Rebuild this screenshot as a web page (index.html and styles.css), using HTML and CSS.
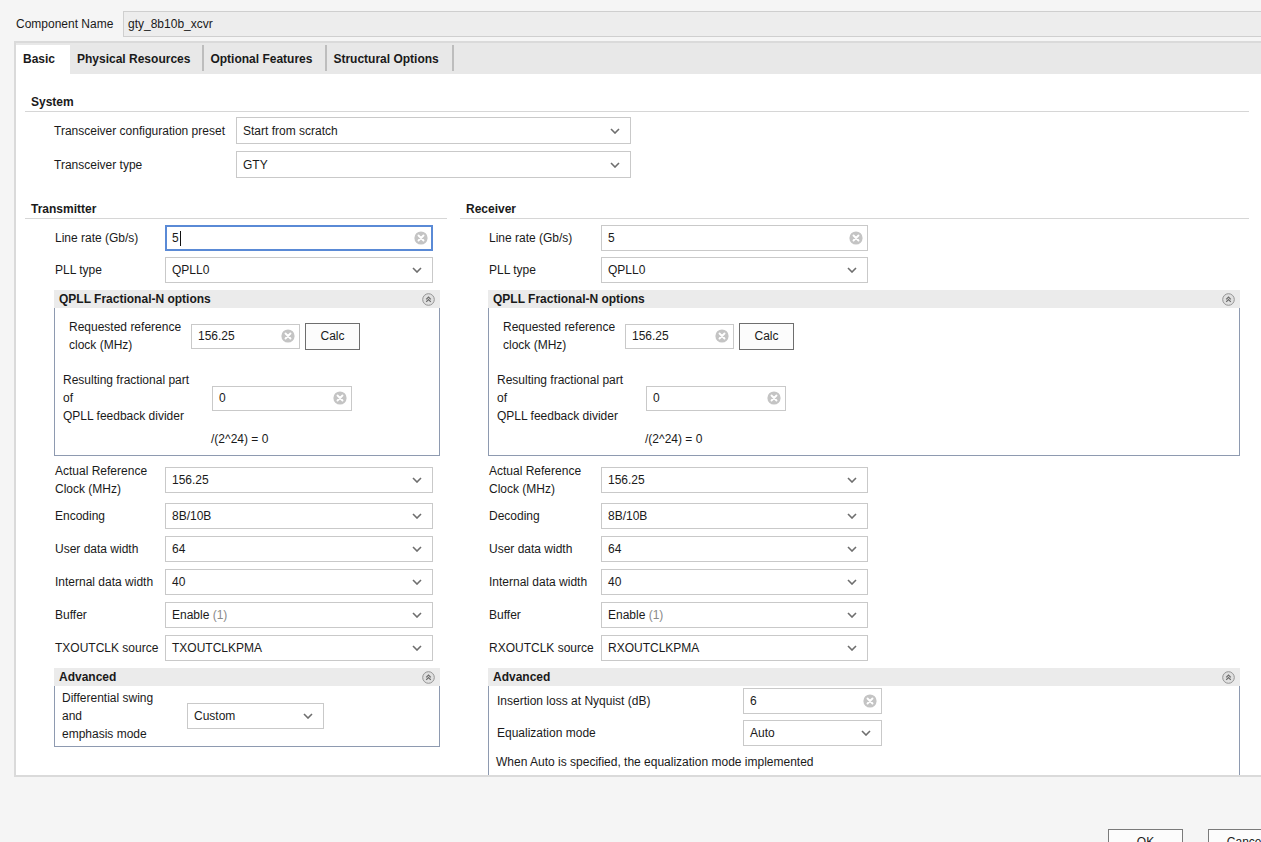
FILE: index.html
```html
<!DOCTYPE html>
<html lang="en">
<head>
<meta charset="UTF-8" />
<title>Customize IP - Transceivers Wizard</title>
<link rel="stylesheet" href="styles.css">
</head>
<body>

<svg class="sprite" xmlns="http://www.w3.org/2000/svg">
  <symbol id="i-clear" viewBox="0 0 14 14">
    <circle cx="7" cy="7" r="6.6" fill="#c4c4c4"/>
    <path d="M4.5 4.5 L9.5 9.5 M9.5 4.5 L4.5 9.5" stroke="#fff" stroke-width="1.9" stroke-linecap="round"/>
  </symbol>
  <symbol id="i-down" viewBox="0 0 10 6">
    <path d="M1 1 L5 5 L9 1" fill="none" stroke="#6e6e6e" stroke-width="1.6"/>
  </symbol>
  <symbol id="i-collapse" viewBox="0 0 13 13">
    <circle cx="6.5" cy="6.5" r="5.8" fill="#e0e0e0" stroke="#939393" stroke-width="1"/>
    <path d="M4.2 6.4 L6.5 4.1 L8.8 6.4 M4.2 8.9 L6.5 6.6 L8.8 8.9" fill="none" stroke="#6a6a6a" stroke-width="1.2"/>
  </symbol>
</svg>

<div class="page">

  <div class="name-row">
    <span class="lbl">Component Name</span>
    <div class="name-field">gty_8b10b_xcvr</div>
  </div>

  <div class="panel">
    <div class="tabs">
      <div class="tab active">Basic</div>
      <div class="tab">Physical Resources</div>
      <div class="tab">Optional Features</div>
      <div class="tab">Structural Options</div>
    </div>

    <div class="tab-body">

      <!-- System -->
      <section class="group sys">
        <h4>System</h4>
        <div class="rows">
          <div class="row">
            <span class="lbl">Transceiver configuration preset</span>
            <div class="select">Start from scratch<svg class="chev"><use href="#i-down"/></svg></div>
          </div>
          <div class="row">
            <span class="lbl">Transceiver type</span>
            <div class="select">GTY<svg class="chev"><use href="#i-down"/></svg></div>
          </div>
        </div>
      </section>

      <div class="cols">

        <!-- Transmitter -->
        <section class="group tx">
          <h4>Transmitter</h4>
          <div class="rows">
            <div class="row">
              <span class="lbl">Line rate (Gb/s)</span>
              <div class="field focus">5<span class="caret"></span><svg class="clr"><use href="#i-clear"/></svg></div>
            </div>
            <div class="row pll">
              <span class="lbl">PLL type</span>
              <div class="select">QPLL0<svg class="chev"><use href="#i-down"/></svg></div>
            </div>

            <div class="collapse qpll">
              <div class="c-head">QPLL Fractional-N options<svg class="col-ico"><use href="#i-collapse"/></svg></div>
              <div class="c-body">
                <div class="req">
                  <span class="lbl">Requested reference<br>clock (MHz)</span>
                  <div class="field small">156.25<svg class="clr"><use href="#i-clear"/></svg></div>
                  <button class="btn">Calc</button>
                </div>
                <div class="res">
                  <span class="lbl">Resulting fractional part<br>of<br>QPLL feedback divider</span>
                  <div class="field wide">0<svg class="clr"><use href="#i-clear"/></svg></div>
                </div>
                <div class="formula">/(2^24) = 0</div>
              </div>
            </div>

            <div class="row tall">
              <span class="lbl two">Actual Reference<br>Clock (MHz)</span>
              <div class="select">156.25<svg class="chev"><use href="#i-down"/></svg></div>
            </div>
            <div class="row">
              <span class="lbl">Encoding</span>
              <div class="select">8B/10B<svg class="chev"><use href="#i-down"/></svg></div>
            </div>
            <div class="row">
              <span class="lbl">User data width</span>
              <div class="select">64<svg class="chev"><use href="#i-down"/></svg></div>
            </div>
            <div class="row">
              <span class="lbl">Internal data width</span>
              <div class="select">40<svg class="chev"><use href="#i-down"/></svg></div>
            </div>
            <div class="row">
              <span class="lbl">Buffer</span>
              <div class="select">Enable&nbsp;<span class="dim">(1)</span><svg class="chev"><use href="#i-down"/></svg></div>
            </div>
            <div class="row">
              <span class="lbl">TXOUTCLK source</span>
              <div class="select">TXOUTCLKPMA<svg class="chev"><use href="#i-down"/></svg></div>
            </div>

            <div class="collapse adv">
              <div class="c-head">Advanced<svg class="col-ico"><use href="#i-collapse"/></svg></div>
              <div class="c-body">
                <div class="adv-row">
                  <span class="lbl">Differential swing<br>and<br>emphasis mode</span>
                  <div class="select">Custom<svg class="chev"><use href="#i-down"/></svg></div>
                </div>
              </div>
            </div>
          </div>
        </section>

        <!-- Receiver -->
        <section class="group rx">
          <h4>Receiver</h4>
          <div class="rows">
            <div class="row">
              <span class="lbl">Line rate (Gb/s)</span>
              <div class="field">5<svg class="clr"><use href="#i-clear"/></svg></div>
            </div>
            <div class="row pll">
              <span class="lbl">PLL type</span>
              <div class="select">QPLL0<svg class="chev"><use href="#i-down"/></svg></div>
            </div>

            <div class="collapse qpll">
              <div class="c-head">QPLL Fractional-N options<svg class="col-ico"><use href="#i-collapse"/></svg></div>
              <div class="c-body">
                <div class="req">
                  <span class="lbl">Requested reference<br>clock (MHz)</span>
                  <div class="field small">156.25<svg class="clr"><use href="#i-clear"/></svg></div>
                  <button class="btn">Calc</button>
                </div>
                <div class="res">
                  <span class="lbl">Resulting fractional part<br>of<br>QPLL feedback divider</span>
                  <div class="field wide">0<svg class="clr"><use href="#i-clear"/></svg></div>
                </div>
                <div class="formula">/(2^24) = 0</div>
              </div>
            </div>

            <div class="row tall">
              <span class="lbl two">Actual Reference<br>Clock (MHz)</span>
              <div class="select">156.25<svg class="chev"><use href="#i-down"/></svg></div>
            </div>
            <div class="row">
              <span class="lbl">Decoding</span>
              <div class="select">8B/10B<svg class="chev"><use href="#i-down"/></svg></div>
            </div>
            <div class="row">
              <span class="lbl">User data width</span>
              <div class="select">64<svg class="chev"><use href="#i-down"/></svg></div>
            </div>
            <div class="row">
              <span class="lbl">Internal data width</span>
              <div class="select">40<svg class="chev"><use href="#i-down"/></svg></div>
            </div>
            <div class="row">
              <span class="lbl">Buffer</span>
              <div class="select">Enable&nbsp;<span class="dim">(1)</span><svg class="chev"><use href="#i-down"/></svg></div>
            </div>
            <div class="row">
              <span class="lbl">RXOUTCLK source</span>
              <div class="select">RXOUTCLKPMA<svg class="chev"><use href="#i-down"/></svg></div>
            </div>

            <div class="collapse adv">
              <div class="c-head">Advanced<svg class="col-ico"><use href="#i-collapse"/></svg></div>
              <div class="c-body">
                <div class="eq-row">
                  <span class="lbl">Insertion loss at Nyquist (dB)</span>
                  <div class="field">6<svg class="clr"><use href="#i-clear"/></svg></div>
                </div>
                <div class="eq-row">
                  <span class="lbl">Equalization mode</span>
                  <div class="select">Auto<svg class="chev"><use href="#i-down"/></svg></div>
                </div>
                <p class="note">When Auto is specified, the equalization mode implemented<br>is chosen by the wizard based on the insertion loss value.</p>
              </div>
            </div>
          </div>
        </section>

      </div>
    </div>
  </div>

  <div class="footer">
    <button class="btn">OK</button>
    <button class="btn">Cancel</button>
  </div>

</div>

</body>
</html>
```

FILE: styles.css
```css
html, body {
  margin: 0;
  overflow: hidden;
}
body {
  background: #f5f5f5;
  font: 12px "Liberation Sans", Arial, sans-serif;
  color: #1a1a1a;
}
.sprite {
  display: none;
}
.page {
  width: 1300px;
}

/* component name */
.name-row {
  display: flex;
  align-items: center;
  padding-top: 11px;
}
.name-row .lbl {
  width: 107px;
  padding-left: 16px;
  flex: none;
}
.name-field {
  flex: 1;
  height: 26px;
  box-sizing: border-box;
  border: 1px solid #cfcfcf;
  background: #ededed;
  padding-left: 4px;
  display: flex;
  align-items: center;
}

/* tabbed panel */
.panel {
  margin: 4px 0 0 14px;
  width: 1258px;
  border: 2px solid #dadada;
  box-sizing: border-box;
}
.tabs {
  display: flex;
  align-items: flex-start;
  height: 31px;
  padding-top: 2px;
  box-sizing: border-box;
  background: #e8e8e8;
}
.tab {
  height: 26px;
  box-sizing: border-box;
  display: flex;
  align-items: center;
  padding: 1px 13px 0 6px;
  border-right: 2px solid #bdbdbd;
  font-weight: bold;
}
.tab.active {
  height: 29px;
  width: 54px;
  padding: 0 0 2px 7px;
  background: #fff;
  border-right: none;
}
.tab.active + .tab {
  padding-left: 7px;
  padding-right: 12px;
}
.tab-body {
  height: 701px;
  overflow: hidden;
  background: #fff;
  padding: 21px 21px 0 9px;
  box-sizing: border-box;
}

/* groups */
.group h4 {
  margin: 0;
  font-size: 12px;
  line-height: 15px;
  padding: 0 0 1px 6px;
  border-bottom: 1px solid #d6d6d6;
}
.rows {
  display: flex;
  flex-direction: column;
  gap: 7px;
  margin-top: 6px;
}
.sys .rows {
  margin-top: 5px;
}
.row {
  display: flex;
  align-items: center;
  min-height: 26px;
  padding-left: 30px;
}
.row .lbl {
  flex: none;
  width: 110px;
}
.row.pll {
  margin-top: -1px;
}
.row.tall {
  height: 33px;
}
.lbl.two {
  line-height: 18px;
}
.sys .row {
  padding-left: 29px;
}
.sys .row .lbl {
  width: 182px;
}
.sys .select {
  width: 395px;
  height: 27px;
}
.cols {
  display: flex;
  gap: 13px;
  margin-top: 24px;
}
.tx {
  width: 422px;
  flex: none;
}
.tx .select, .tx .row .field {
  width: 268px;
}
.rx {
  flex: 1;
}
.rx .row {
  padding-left: 29px;
}
.rx .row .lbl {
  width: 112px;
}
.rx .select, .rx .row .field {
  width: 267px;
}

/* controls */
.select, .field {
  display: flex;
  align-items: center;
  height: 26px;
  box-sizing: border-box;
  border: 1px solid #c9c9c9;
  background: #fff;
  padding: 0 10px 0 6px;
  white-space: nowrap;
}
.field {
  padding-right: 4px;
}
.field.focus {
  border: 2px solid #5a8ad6;
  padding-left: 5px;
  padding-right: 3px;
}
.caret {
  width: 1px;
  height: 15px;
  background: #111;
  margin-left: 1px;
}
.chev {
  width: 10px;
  height: 6px;
  margin-left: auto;
  flex: none;
}
.clr {
  width: 14px;
  height: 14px;
  margin-left: auto;
  flex: none;
}
.dim {
  color: #8a8a8a;
}
.btn {
  font: inherit;
  color: #1a1a1a;
  background: #fcfcfc;
  border: 1px solid #6e6e6e;
  border-radius: 0;
  padding: 0;
}

/* collapsible blocks */
.collapse {
  margin: 0 7px 0 29px;
}
.rx .collapse {
  margin: 0 9px 0 28px;
}
.c-head {
  height: 18px;
  display: flex;
  align-items: center;
  padding: 0 5px 0 5px;
  background: #ebebeb;
  font-weight: bold;
}
.col-ico {
  width: 13px;
  height: 13px;
  margin-left: auto;
}
.c-body {
  border: 1px solid #8e9ab0;
  border-top: none;
}
.qpll .c-body {
  padding: 10px 0 7px;
  line-height: 18px;
}
.req, .res, .adv-row, .eq-row {
  display: flex;
  align-items: center;
}
.req .lbl {
  width: 136px;
  padding-left: 14px;
  box-sizing: border-box;
  flex: none;
}
.field.small {
  width: 109px;
  height: 25px;
}
.req .btn {
  width: 55px;
  height: 27px;
  margin-left: 5px;
}
.res {
  margin-top: 17px;
}
.res .lbl {
  width: 157px;
  padding-left: 8px;
  box-sizing: border-box;
  flex: none;
}
.field.wide {
  width: 140px;
  height: 25px;
}
.formula {
  margin-top: 5px;
  padding-left: 156px;
}

.adv .c-body {
  padding: 3px 0 3px;
}
.adv-row .lbl {
  width: 132px;
  padding-left: 7px;
  box-sizing: border-box;
  line-height: 18px;
  flex: none;
}
.adv-row .select {
  width: 137px;
}
.rx .adv .c-body {
  padding-top: 2px;
}
.eq-row + .eq-row {
  margin-top: 6px;
}
.eq-row .lbl {
  width: 254px;
  padding-left: 8px;
  box-sizing: border-box;
  flex: none;
}
.eq-row .select, .eq-row .field {
  width: 139px;
}
.note {
  margin: 7px 0 0;
  padding-left: 7px;
  line-height: 18px;
}

/* dialog buttons */
.footer {
  display: flex;
  justify-content: flex-end;
  gap: 25px;
  padding: 52px 17px 0 0;
}
.footer .btn {
  width: 75px;
  height: 26px;
  border-color: #7a7a7a;
}
```
